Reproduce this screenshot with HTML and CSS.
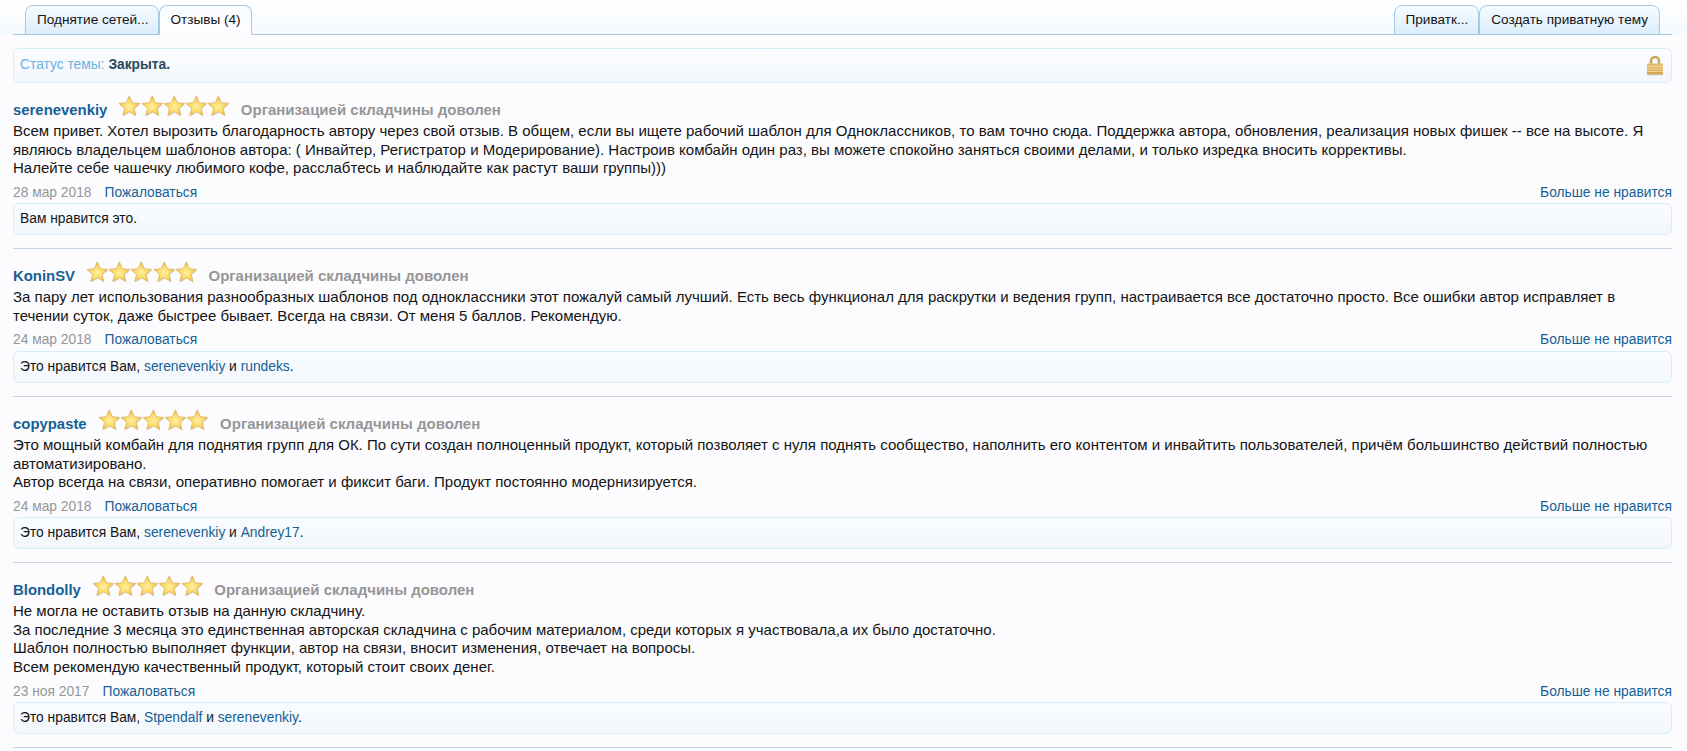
FILE: index.html
```html
<!DOCTYPE html>
<html lang="ru">
<head>
<meta charset="utf-8">
<title>Отзывы</title>
<link rel="stylesheet" href="styles.css">
</head>
<body>
<svg class="defs" width="0" height="0" aria-hidden="true">
  <defs>
    <radialGradient id="starFill" cx="0.5" cy="0.55" r="0.55">
      <stop offset="0" stop-color="#fff0a0"/>
      <stop offset="0.55" stop-color="#fbd964"/>
      <stop offset="1" stop-color="#eaa92e"/>
    </radialGradient>
    <linearGradient id="lockFill" x1="0" y1="0" x2="0" y2="1">
      <stop offset="0" stop-color="#e4c070"/>
      <stop offset="1" stop-color="#cfa552"/>
    </linearGradient>
    <symbol id="star" viewBox="0 0 22 21" overflow="visible">
      <path d="M12.200 2.300l2.800 6.500 7.200.6-5.500 4.800 1.700 7.100-6.200-3.700-6.200 3.700 1.700-7.100L2.200 9.400l7.200-.6z" fill="#8a8a80" opacity=".25"/>
      <path d="M11.200.8l3 6.900 7.400.7-5.600 4.900 1.700 7.300-6.500-3.900-6.500 3.900 1.700-7.300L.8 8.400l7.400-.7z" fill="url(#starFill)" stroke="#dcb66c" stroke-width=".8" stroke-linejoin="round"/>
    </symbol>
  </defs>
</svg>
<nav class="tabs">
  <div class="tab-group">
    <a class="tab">Поднятие сетей...</a>
    <a class="tab tab-active">Отзывы (4)</a>
  </div>
  <div class="tab-group">
    <a class="tab">Приватк...</a>
    <a class="tab tab-wide">Создать приватную тему</a>
  </div>
</nav>

<div class="status">
  <span><span class="status-label">Статус темы:</span> <b class="status-value">Закрыта.</b></span>
  <svg class="lock" width="18" height="20" viewBox="0 0 18 20" aria-hidden="true">
    <path d="M5 8V5a4 4 0 0 1 8 0v3" fill="none" stroke="#c9a55a" stroke-width="2.400"/>
    <rect x="0.500" y="17.500" width="17" height="2" rx="1" fill="#8a8a80" opacity=".3"/>
    <rect x="1" y="7.500" width="16" height="11" rx="1" fill="url(#lockFill)"/>
    <path d="M1 10.500h16M1 13h16M1 15.500h16" stroke="#f3dd9c" stroke-width=".9"/>
  </svg>
</div>

<article class="review">
  <header class="review-head">
    <a class="author">serenevenkiy</a>
    <span class="stars"><svg><use href="#star"/></svg><svg><use href="#star"/></svg><svg><use href="#star"/></svg><svg><use href="#star"/></svg><svg><use href="#star"/></svg></span>
    <span class="verdict">Организацией складчины доволен</span>
  </header>
  <div class="review-text">Всем привет. Хотел вырозить благодарность автору через свой отзыв. В общем, если вы ищете рабочий шаблон для Одноклассников, то вам точно сюда. Поддержка автора, обновления, реализация новых фишек -- все на высоте. Я являюсь владельцем шаблонов автора: ( Инвайтер, Регистратор и Модерирование). Настроив комбайн один раз, вы можете спокойно заняться своими делами, и только изредка вносить коррективы.<br>Налейте себе чашечку любимого кофе, расслабтесь и наблюдайте как растут ваши группы)))</div>
  <div class="review-meta">
    <span><span class="date">28 мар 2018</span><a class="link report">Пожаловаться</a></span>
    <a class="link">Больше не нравится</a>
  </div>
  <div class="likes">Вам нравится это.</div>
</article>

<article class="review">
  <header class="review-head">
    <a class="author">KoninSV</a>
    <span class="stars"><svg><use href="#star"/></svg><svg><use href="#star"/></svg><svg><use href="#star"/></svg><svg><use href="#star"/></svg><svg><use href="#star"/></svg></span>
    <span class="verdict">Организацией складчины доволен</span>
  </header>
  <div class="review-text">За пару лет использования разнообразных шаблонов под одноклассники этот пожалуй самый лучший. Есть весь функционал для раскрутки и ведения групп, настраивается все достаточно просто. Все ошибки автор исправляет в течении суток, даже быстрее бывает. Всегда на связи. От меня 5 баллов. Рекомендую.</div>
  <div class="review-meta">
    <span><span class="date">24 мар 2018</span><a class="link report">Пожаловаться</a></span>
    <a class="link">Больше не нравится</a>
  </div>
  <div class="likes">Это нравится Вам, <a class="link">serenevenkiy</a> и <a class="link">rundeks</a>.</div>
</article>

<article class="review">
  <header class="review-head">
    <a class="author">copypaste</a>
    <span class="stars"><svg><use href="#star"/></svg><svg><use href="#star"/></svg><svg><use href="#star"/></svg><svg><use href="#star"/></svg><svg><use href="#star"/></svg></span>
    <span class="verdict">Организацией складчины доволен</span>
  </header>
  <div class="review-text">Это мощный комбайн для поднятия групп для ОК. По сути создан полноценный продукт, который позволяет с нуля поднять сообщество, наполнить его контентом и инвайтить пользователей, причём большинство действий полностью автоматизировано.<br>Автор всегда на связи, оперативно помогает и фиксит баги. Продукт постоянно модернизируется.</div>
  <div class="review-meta">
    <span><span class="date">24 мар 2018</span><a class="link report">Пожаловаться</a></span>
    <a class="link">Больше не нравится</a>
  </div>
  <div class="likes">Это нравится Вам, <a class="link">serenevenkiy</a> и <a class="link">Andrey17</a>.</div>
</article>

<article class="review">
  <header class="review-head">
    <a class="author">Blondolly</a>
    <span class="stars"><svg><use href="#star"/></svg><svg><use href="#star"/></svg><svg><use href="#star"/></svg><svg><use href="#star"/></svg><svg><use href="#star"/></svg></span>
    <span class="verdict">Организацией складчины доволен</span>
  </header>
  <div class="review-text">Не могла не оставить отзыв на данную складчину.<br>За последние 3 месяца это единственная авторская складчина с рабочим материалом, среди которых я участвовала,а их было достаточно.<br>Шаблон полностью выполняет функции, автор на связи, вносит изменения, отвечает на вопросы.<br>Всем рекомендую качественный продукт, который стоит своих денег.</div>
  <div class="review-meta">
    <span><span class="date">23 ноя 2017</span><a class="link report">Пожаловаться</a></span>
    <a class="link">Больше не нравится</a>
  </div>
  <div class="likes">Это нравится Вам, <a class="link">Stpendalf</a> и <a class="link">serenevenkiy</a>.</div>
</article>
</body>
</html>
```
FILE: styles.css
```css
* { box-sizing: border-box; }
html, body { height: 100%; }
body {
  margin: 0;
  padding: 5px 15px 0 13px;
  background: linear-gradient(#fff 0, #f5faff 34px, #fcfcff 35px);
  font: 13.8px/18.6px "Liberation Sans", Arial, sans-serif;
  color: #141414;
  overflow: hidden;
}
.defs { position: absolute; }
.tabs {
  display: flex;
  justify-content: space-between;
  height: 30px;
  padding: 0 12px;
  border-bottom: 1px solid #a5cae4;
}
.tab-group { display: flex; }
.tab {
  height: 30px;
  padding: 0 10px 0 11px;
  font-size: 13.6px;
  line-height: 28px;
  border: 1px solid #a5cae4;
  border-radius: 8px 8px 0 0;
  background: linear-gradient(#f5fbff, #dbeefb);
  color: #141414;
}
.tab-wide { padding-right: 11px; }
.tab-active {
  padding: 0 10px;
  background: linear-gradient(#fafcff, #fdfdff);
  border-bottom-color: #fcfcff;
}
.status {
  display: flex;
  justify-content: space-between;
  align-items: center;
  height: 35px;
  margin-top: 13px;
  padding: 0 7px 0 6px;
  border: 1px solid #d7edfc;
  border-radius: 6px;
  background: linear-gradient(#fcfcff, #f2f7fc);
}
.status-label { color: #6cb2e4; }
.status-value { color: #2b485c; }
.lock { display: block; }
.review {
  padding: 17px 0 13px;
  border-bottom: 1px solid #c4d6e4;
}
.review-head {
  display: flex;
  align-items: center;
  height: 21px;
}
.author { font-weight: bold; color: #176093; font-size: 14.9px; }
.stars { display: flex; margin: 0 11.5px 10px 11px; }
.stars svg { display: block; width: 22.200px; height: 21px; overflow: visible; }
.verdict { font-weight: bold; color: #969696; font-size: 15px; }
.review-text { margin-top: 1px; font-size: 15px; }
.review-meta {
  display: flex;
  justify-content: space-between;
  margin-top: 5px;
  height: 20px;
  line-height: 20px;
}
.date { color: #969696; }
.link { color: #176093; }
.report { margin-left: 13px; }
.likes {
  height: 32px;
  margin-top: 0.5px;
  padding: 0 6px;
  line-height: 30px;
  border: 1px solid #d7edfc;
  border-radius: 6px;
  background: linear-gradient(#f9fcff, #f2f7fc);
}
```
